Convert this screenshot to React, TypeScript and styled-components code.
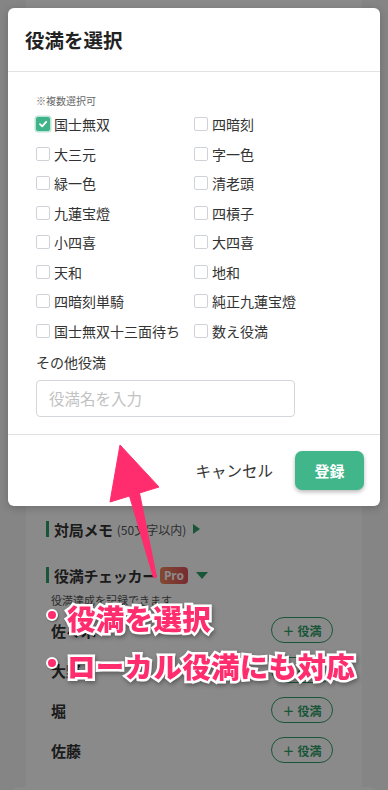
import React from "react";
import styled, { createGlobalStyle } from "styled-components";

const GlobalStyle = createGlobalStyle`
  html, body { margin: 0; padding: 0; }
  body {
    font-family: "Noto Sans CJK JP", "Noto Sans", sans-serif;
    -webkit-font-smoothing: antialiased;
  }
  * { box-sizing: border-box; }
`;

const Page = styled.div`
  position: relative;
  width: 388px;
  height: 790px;
  overflow: hidden;
  background: #f5f5f5;
`;

const Card = styled.div`
  margin: 0 26px;
  height: 787px;
  background: #ffffff;
  padding: 519px 20px 0;
  display: flex;
  flex-direction: column;
`;

const BottomSheet = styled.div`
  margin: 0 8px;
  height: 40px;
  background: #ffffff;
  border-radius: 12px 12px 0 0;
`;

const SectionHeader = styled.div<{ $gapTop?: number }>`
  display: flex;
  align-items: center;
  height: 20px;
  margin-top: ${(p) => p.$gapTop ?? 0}px;
`;

const Bar = styled.span`
  width: 3px;
  height: 16px;
  background: #2f9e6a;
  margin-right: 5px;
`;

const SectionTitle = styled.span`
  font-size: 15px;
  font-weight: 700;
  color: #333;
  letter-spacing: -0.3px;
`;

const SectionSub = styled.span`
  font-size: 12px;
  color: #555;
  margin-left: 4px;
`;

const Triangle = styled.span<{ $down?: boolean }>`
  width: 0;
  height: 0;
  margin-left: ${(p) => (p.$down ? 8 : 7)}px;
  ${(p) =>
    p.$down
      ? `border-left: 6px solid transparent; border-right: 6px solid transparent; border-top: 7px solid #2f9e6a;`
      : `border-top: 5px solid transparent; border-bottom: 5px solid transparent; border-left: 7px solid #2f9e6a;`}
`;

const ProBadge = styled.span`
  margin-left: 3px;
  height: 17px;
  padding: 0 4px;
  border-radius: 4px;
  background: linear-gradient(90deg, #f0885c, #de4f5c);
  color: #fff;
  font-size: 12px;
  font-weight: 700;
  line-height: 17px;
  font-family: "Noto Sans", sans-serif;
`;

const Description = styled.div`
  margin-top: 8px;
  padding-left: 5px;
  font-size: 11px;
  line-height: 14px;
  color: #555;
`;

const PlayerList = styled.div`
  margin-top: 3px;
  display: flex;
  flex-direction: column;
`;

const PlayerRow = styled.div`
  height: 40px;
  display: flex;
  align-items: center;
  justify-content: space-between;
  padding: 0 9px 0 5px;
`;

const PlayerName = styled.span`
  font-size: 15px;
  font-weight: 700;
  color: #333;
`;

const AddButton = styled.button`
  width: 62px;
  height: 26px;
  border-radius: 13px;
  border: 1.5px solid #2f9e6a;
  background: #fff;
  color: #2f9e6a;
  font-family: inherit;
  font-size: 12px;
  font-weight: 700;
  padding: 0;
  display: flex;
  align-items: center;
  justify-content: center;
  gap: 3px;
`;

const Overlay = styled.div`
  position: absolute;
  inset: 0;
  background: rgba(0, 0, 0, 0.46);
`;

const Modal = styled.div`
  position: absolute;
  left: 8px;
  top: 8px;
  width: 372px;
  height: 498px;
  background: #fff;
  border-radius: 6px;
  box-shadow: 0 2px 8px rgba(0, 0, 0, 0.2);
  display: flex;
  flex-direction: column;
`;

const ModalHeader = styled.div`
  height: 64px;
  display: flex;
  align-items: center;
  padding: 0 17px;
  border-bottom: 1px solid #e2e2e2;
`;

const ModalTitle = styled.h2`
  margin: 0;
  font-size: 19.5px;
  font-weight: 700;
  color: #222;
`;

const ModalBody = styled.div`
  padding: 22px 28px 17px;
  border-bottom: 1px solid #e2e2e2;
`;

const Note = styled.div`
  font-size: 10px;
  line-height: 14px;
  color: #666;
`;

const Grid = styled.div`
  margin-top: 1.5px;
  display: grid;
  grid-template-columns: 158px 158px;
  grid-auto-rows: 29.5px;
`;

const Option = styled.label`
  display: flex;
  align-items: center;
  gap: 4px;
  font-size: 14px;
  color: #333;
  white-space: nowrap;
`;

const Box = styled.span<{ $checked?: boolean }>`
  width: 14px;
  height: 14px;
  border-radius: 2px;
  display: flex;
  align-items: center;
  justify-content: center;
  flex: none;
  border: 1px solid ${(p) => (p.$checked ? "#3fb389" : "#cfd3d8")};
  background: ${(p) => (p.$checked ? "#3fb389" : "#fff")};
  box-shadow: ${(p) => (p.$checked ? "0 0 0 1.5px rgba(63,179,137,0.35)" : "none")};
`;

const OtherLabel = styled.div`
  margin-top: 6px;
  font-size: 14px;
  line-height: 20px;
  color: #333;
`;

const TextInput = styled.input`
  display: block;
  margin-top: 8px;
  width: 259px;
  height: 37px;
  border: 1px solid #d3d6db;
  border-radius: 4px;
  padding: 0 12px;
  font-family: inherit;
  font-size: 15.5px;
  color: #333;
  outline: none;
  &::placeholder { color: #c2c2c2; }
`;

const ModalFooter = styled.div`
  flex: 1;
  display: flex;
  align-items: center;
  justify-content: flex-end;
  gap: 22px;
  padding-right: 16px;
`;

const CancelButton = styled.button`
  border: none;
  background: none;
  padding: 0;
  font-family: inherit;
  font-size: 15.5px;
  color: #333;
`;

const SubmitButton = styled.button`
  width: 69px;
  height: 39px;
  border: none;
  border-radius: 7px;
  background: #40b68a;
  color: #fff;
  font-family: inherit;
  font-size: 15px;
  font-weight: 700;
  box-shadow: 0 2px 4px rgba(0, 0, 0, 0.28);
`;

const Annotation = styled.div`
  position: absolute;
  left: 46px;
  top: 593px;
  display: flex;
  flex-direction: column;
`;

const Callout = styled.div`
  display: flex;
  align-items: center;
  height: 48px;
  gap: 9px;
`;

const Dot = styled.span`
  width: 12px;
  height: 12px;
  border-radius: 50%;
  background: #ff2d6e;
  border: 2px solid #fff;
  box-shadow: 1px 1px 2px rgba(0, 0, 0, 0.35);
  margin-top: -4px;
`;

const CalloutText = styled.span`
  font-size: 28.5px;
  font-weight: 900;
  color: #ff2d6e;
  letter-spacing: 0.3px;
  -webkit-text-stroke: 5px #ffffff;
  paint-order: stroke fill;
  filter: drop-shadow(1px 2px 2px rgba(0, 0, 0, 0.35));
  white-space: nowrap;
`;

const ArrowLayer = styled.svg`
  position: absolute;
  left: 0;
  top: 0;
  pointer-events: none;
`;

const leftOptions = [
  "国士無双",
  "大三元",
  "緑一色",
  "九蓮宝燈",
  "小四喜",
  "天和",
  "四暗刻単騎",
  "国士無双十三面待ち",
];
const rightOptions = [
  "四暗刻",
  "字一色",
  "清老頭",
  "四槓子",
  "大四喜",
  "地和",
  "純正九蓮宝燈",
  "数え役満",
];

const players = ["佐々木", "大野", "堀", "佐藤"];

const Check = () => (
  <svg width="10" height="10" viewBox="0 0 10 10">
    <polyline points="2,5.2 4.2,7.3 8.2,2.8" fill="none" stroke="#fff" strokeWidth="1.8" strokeLinecap="round" strokeLinejoin="round" />
  </svg>
);

export default function App() {
  const options: string[] = [];
  leftOptions.forEach((l, i) => {
    options.push(l);
    options.push(rightOptions[i]);
  });
  return (
    <>
      <GlobalStyle />
      <Page>
        <Card>
          <SectionHeader>
            <Bar />
            <SectionTitle>対局メモ</SectionTitle>
            <SectionSub>(50文字以内)</SectionSub>
            <Triangle />
          </SectionHeader>
          <SectionHeader $gapTop={26}>
            <Bar />
            <SectionTitle>役満チェッカー</SectionTitle>
            <ProBadge>Pro</ProBadge>
            <Triangle $down />
          </SectionHeader>
          <Description>役満達成を記録できます</Description>
          <PlayerList>
            {players.map((p) => (
              <PlayerRow key={p}>
                <PlayerName>{p}</PlayerName>
                <AddButton>
                  <span>＋</span>
                  <span>役満</span>
                </AddButton>
              </PlayerRow>
            ))}
          </PlayerList>
        </Card>
        <BottomSheet />
        <Overlay />
        <Modal>
          <ModalHeader>
            <ModalTitle>役満を選択</ModalTitle>
          </ModalHeader>
          <ModalBody>
            <Note>※複数選択可</Note>
            <Grid>
              {options.map((o, i) => (
                <Option key={o}>
                  <Box $checked={i === 0}>{i === 0 && <Check />}</Box>
                  {o}
                </Option>
              ))}
            </Grid>
            <OtherLabel>その他役満</OtherLabel>
            <TextInput placeholder="役満名を入力" />
          </ModalBody>
          <ModalFooter>
            <CancelButton>キャンセル</CancelButton>
            <SubmitButton>登録</SubmitButton>
          </ModalFooter>
        </Modal>
        <ArrowLayer width="388" height="790" viewBox="0 0 388 790">
          <polygon
            points="120,445 159,487 139.5,493 156.5,577 153.5,577.5 129.5,496 110,502"
            fill="#ff2d6e"
            stroke="#ff2d6e"
            strokeWidth="1"
            strokeLinejoin="round"
          />
        </ArrowLayer>
        <Annotation>
          <Callout>
            <Dot />
            <CalloutText>役満を選択</CalloutText>
          </Callout>
          <Callout>
            <Dot />
            <CalloutText>ローカル役満にも対応</CalloutText>
          </Callout>
        </Annotation>
      </Page>
    </>
  );
}
